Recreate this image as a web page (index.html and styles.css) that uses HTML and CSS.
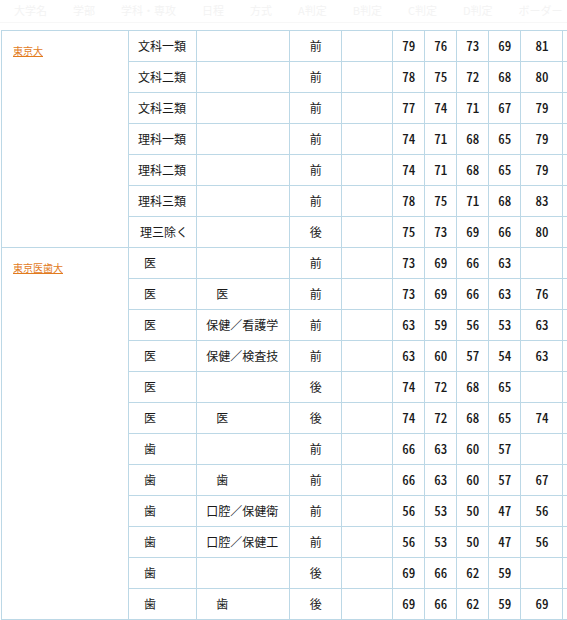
FILE: index.html
```html
<!DOCTYPE html>
<html lang="ja">
<head>
<meta charset="utf-8">
<title>合格目標ライン</title>
<link rel="stylesheet" href="styles.css">
</head>
<body>
<div class="ghost">
  <span>大学名</span><span>学部</span><span>学科・専攻</span><span>日程</span><span>方式</span><span>A判定</span><span>B判定</span><span>C判定</span><span>D判定</span><span>ボーダー</span>
</div>
<table class="grid">
  <colgroup>
    <col class="c-univ"><col class="c-fac"><col class="c-dep"><col class="c-sch"><col class="c-mode">
    <col class="c-n"><col class="c-n"><col class="c-n"><col class="c-n"><col class="c-b"><col class="c-x">
  </colgroup>
  <tbody>
    <tr><td class="univ" rowspan="7"><a href="#">東京大</a></td><td class="fac">文科一類</td><td></td><td class="ctr">前</td><td></td><td class="num">79</td><td class="num">76</td><td class="num">73</td><td class="num">69</td><td class="num">81</td><td class="edge"></td></tr>
    <tr><td class="fac">文科二類</td><td></td><td class="ctr">前</td><td></td><td class="num">78</td><td class="num">75</td><td class="num">72</td><td class="num">68</td><td class="num">80</td><td class="edge"></td></tr>
    <tr><td class="fac">文科三類</td><td></td><td class="ctr">前</td><td></td><td class="num">77</td><td class="num">74</td><td class="num">71</td><td class="num">67</td><td class="num">79</td><td class="edge"></td></tr>
    <tr><td class="fac">理科一類</td><td></td><td class="ctr">前</td><td></td><td class="num">74</td><td class="num">71</td><td class="num">68</td><td class="num">65</td><td class="num">79</td><td class="edge"></td></tr>
    <tr><td class="fac">理科二類</td><td></td><td class="ctr">前</td><td></td><td class="num">74</td><td class="num">71</td><td class="num">68</td><td class="num">65</td><td class="num">79</td><td class="edge"></td></tr>
    <tr><td class="fac">理科三類</td><td></td><td class="ctr">前</td><td></td><td class="num">78</td><td class="num">75</td><td class="num">71</td><td class="num">68</td><td class="num">83</td><td class="edge"></td></tr>
    <tr><td class="fac fac-s">理三除く</td><td></td><td class="ctr">後</td><td></td><td class="num">75</td><td class="num">73</td><td class="num">69</td><td class="num">66</td><td class="num">80</td><td class="edge"></td></tr>

    <tr><td class="univ" rowspan="12"><a href="#">東京医歯大</a></td><td class="fac one">医</td><td></td><td class="ctr">前</td><td></td><td class="num">73</td><td class="num">69</td><td class="num">66</td><td class="num">63</td><td class="num"></td><td class="edge"></td></tr>
    <tr><td class="fac one">医</td><td class="dep one">医</td><td class="ctr">前</td><td></td><td class="num">73</td><td class="num">69</td><td class="num">66</td><td class="num">63</td><td class="num">76</td><td class="edge"></td></tr>
    <tr><td class="fac one">医</td><td class="dep">保健／看護学</td><td class="ctr">前</td><td></td><td class="num">63</td><td class="num">59</td><td class="num">56</td><td class="num">53</td><td class="num">63</td><td class="edge"></td></tr>
    <tr><td class="fac one">医</td><td class="dep">保健／検査技</td><td class="ctr">前</td><td></td><td class="num">63</td><td class="num">60</td><td class="num">57</td><td class="num">54</td><td class="num">63</td><td class="edge"></td></tr>
    <tr><td class="fac one">医</td><td></td><td class="ctr">後</td><td></td><td class="num">74</td><td class="num">72</td><td class="num">68</td><td class="num">65</td><td class="num"></td><td class="edge"></td></tr>
    <tr><td class="fac one">医</td><td class="dep one">医</td><td class="ctr">後</td><td></td><td class="num">74</td><td class="num">72</td><td class="num">68</td><td class="num">65</td><td class="num">74</td><td class="edge"></td></tr>
    <tr><td class="fac one">歯</td><td></td><td class="ctr">前</td><td></td><td class="num">66</td><td class="num">63</td><td class="num">60</td><td class="num">57</td><td class="num"></td><td class="edge"></td></tr>
    <tr><td class="fac one">歯</td><td class="dep one">歯</td><td class="ctr">前</td><td></td><td class="num">66</td><td class="num">63</td><td class="num">60</td><td class="num">57</td><td class="num">67</td><td class="edge"></td></tr>
    <tr><td class="fac one">歯</td><td class="dep">口腔／保健衛</td><td class="ctr">前</td><td></td><td class="num">56</td><td class="num">53</td><td class="num">50</td><td class="num">47</td><td class="num">56</td><td class="edge"></td></tr>
    <tr><td class="fac one">歯</td><td class="dep">口腔／保健工</td><td class="ctr">前</td><td></td><td class="num">56</td><td class="num">53</td><td class="num">50</td><td class="num">47</td><td class="num">56</td><td class="edge"></td></tr>
    <tr><td class="fac one">歯</td><td></td><td class="ctr">後</td><td></td><td class="num">69</td><td class="num">66</td><td class="num">62</td><td class="num">59</td><td class="num"></td><td class="edge"></td></tr>
    <tr><td class="fac one">歯</td><td class="dep one">歯</td><td class="ctr">後</td><td></td><td class="num">69</td><td class="num">66</td><td class="num">62</td><td class="num">59</td><td class="num">69</td><td class="edge"></td></tr>
  </tbody>
</table>
</body>
</html>
```
FILE: styles.css
```css
html, body {
  margin: 0;
  padding: 0;
  overflow: hidden;
  background: #ffffff;
}

body {
  width: 567px;
  height: 620px;
  font-family: "Noto Sans CJK JP", "Noto Sans", sans-serif;
  font-size: 12px;
  color: #1a1a1a;
}

.ghost {
  height: 23px;
  box-sizing: border-box;
  margin-bottom: 7px;
  padding: 3px 0 0 14px;
  display: flex;
  gap: 26px;
  font-size: 11px;
  line-height: 14px;
  color: #f3f3f3;
  border-bottom: 1px solid #f7f7f7;
  white-space: nowrap;
  overflow: hidden;
}

.grid {
  margin-left: 1px;
  border-collapse: collapse;
  table-layout: fixed;
  width: 566px;
}

.c-univ { width: 127px; }
.c-fac  { width: 68px; }
.c-dep  { width: 93px; }
.c-sch  { width: 52px; }
.c-mode { width: 51px; }
.c-n    { width: 32px; }
.c-b    { width: 42px; }
.c-x    { width: 4px; }

.grid td {
  border: 1px solid #bcd8e6;
  height: 30px;
  padding: 0;
  line-height: 14px;
  vertical-align: middle;
  white-space: nowrap;
  overflow: hidden;
}

.grid td.edge {
  border-right: none;
}

.grid td.univ {
  vertical-align: top;
  padding: 12px 0 0 11px;
}

.univ a {
  font-size: 10px;
  color: #e27b1e;
  text-decoration: underline;
}

.fac { padding-left: 9px !important; }
.fac-s { padding-left: 11px !important; }
.fac.one { padding-left: 15px !important; }

.dep { padding-left: 9px !important; }
.dep.one { padding-left: 19px !important; }

.ctr { text-align: center; }

.num {
  text-align: center;
  font-size: 13px;
  font-feature-settings: "hwid" 1;
  font-weight: 500;
}
```
